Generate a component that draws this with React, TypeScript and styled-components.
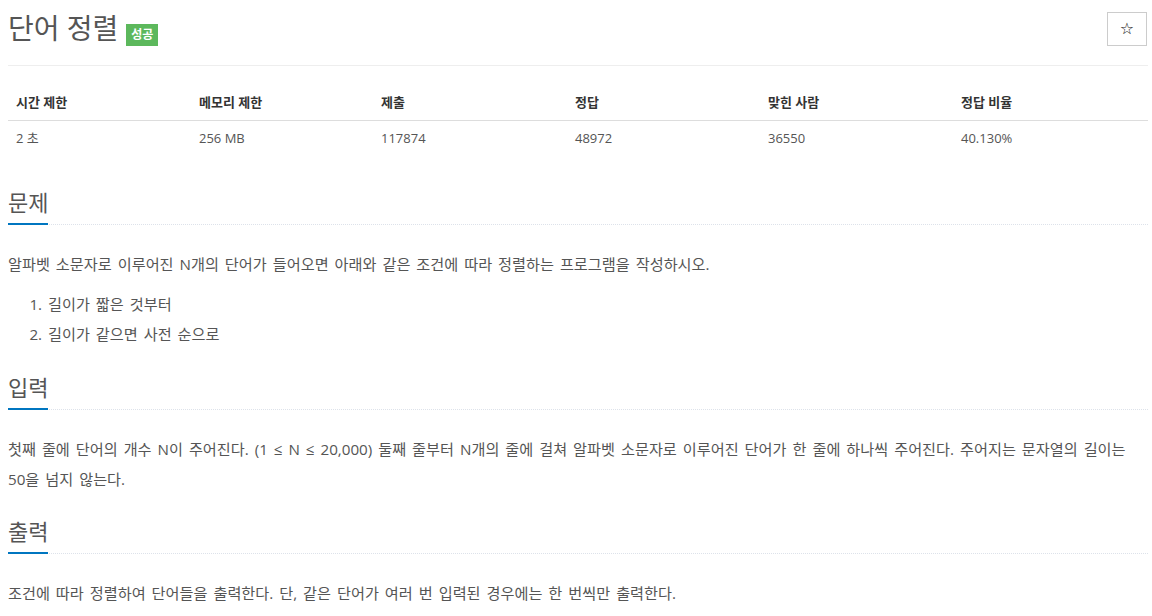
import styled, { createGlobalStyle } from "styled-components";

const GlobalStyle = createGlobalStyle`
  body {
    margin: 0;
    background: #fff;
    font-family: "Open Sans", "Liberation Sans", "Noto Sans CJK KR", sans-serif;
    color: #333;
  }
`;

const Page = styled.div`
  width: 1140px;
  margin-left: 8px;
`;

const TitleRow = styled.div`
  display: flex;
  align-items: center;
  justify-content: space-between;
  padding: 11px 0 19px;
  border-bottom: 1px solid #eee;
`;

const Title = styled.h1`
  display: flex;
  align-items: baseline;
  gap: 8px;
  margin: 0;
  font-size: 28px;
  font-weight: 400;
  line-height: 34px;
  color: #555;
`;

const Badge = styled.span`
  display: inline-block;
  background: #5cb85c;
  color: #fff;
  font-size: 12px;
  font-weight: 700;
  line-height: 15px;
  padding: 3px 5px 4px;
`;

const StarButton = styled.button`
  width: 40px;
  height: 34px;
  margin-right: 1px;
  border: 1px solid #ccc;
  background: #fff;
  color: #111;
  font-family: "DejaVu Sans", sans-serif;
  font-size: 16px;
  padding: 0;
  cursor: pointer;
`;

const InfoTable = styled.table`
  width: 100%;
  margin-top: 18px;
  border-collapse: collapse;
  table-layout: fixed;
  font-size: 13px;
`;

const Th = styled.th<{ $w?: number }>`
  width: ${(p) => (p.$w ? `${p.$w}px` : "auto")};
  text-align: left;
  font-weight: 700;
  padding: 8px;
  line-height: 20px;
  border-bottom: 1px solid #ddd;
  color: #333;
`;

const Td = styled.td`
  padding: 7px 8px 8px;
  line-height: 20px;
  color: #555;
`;

const Section = styled.section<{ $top: number }>`
  margin-top: ${(p) => p.$top}px;
`;

const Headline = styled.div`
  border-bottom: 1px dotted #dde2ea;
  margin-bottom: 24px;
`;

const HeadlineTitle = styled.h2`
  display: inline-block;
  margin: 0 0 -1px;
  padding-bottom: 9px;
  font-size: 22px;
  font-weight: 400;
  line-height: 24px;
  color: #555;
  border-bottom: 2px solid #0076c0;
`;

const Text = styled.p`
  margin: 0 0 10px;
  font-size: 15.2px;
  word-spacing: 2px;
  line-height: 30px;
  color: #555;
`;

const List = styled.ol`
  margin: 0;
  padding-left: 40px;
  font-size: 15.2px;
  word-spacing: 2px;
  line-height: 30px;
  color: #555;
`;

// widths are content widths (th padding of 16px is added on top)
const columns = [
  { label: "시간 제한", value: "2 초", w: 167 },
  { label: "메모리 제한", value: "256 MB", w: 166 },
  { label: "제출", value: "117874", w: 178 },
  { label: "정답", value: "48972", w: 177 },
  { label: "맞힌 사람", value: "36550", w: 177 },
  { label: "정답 비율", value: "40.130%", w: 0 },
];

export default function App() {
  return (
    <Page>
      <GlobalStyle />
      <TitleRow>
        <Title>
          단어 정렬 <Badge>성공</Badge>
        </Title>
        <StarButton>☆</StarButton>
      </TitleRow>

      <InfoTable>
        <thead>
          <tr>
            {columns.map((c) => (
              <Th key={c.label} $w={c.w}>
                {c.label}
              </Th>
            ))}
          </tr>
        </thead>
        <tbody>
          <tr>
            {columns.map((c) => (
              <Td key={c.label}>{c.value}</Td>
            ))}
          </tr>
        </tbody>
      </InfoTable>

      <Section $top={34}>
        <Headline>
          <HeadlineTitle>문제</HeadlineTitle>
        </Headline>
        <Text>
          알파벳 소문자로 이루어진 N개의 단어가 들어오면 아래와 같은 조건에 따라 정렬하는 프로그램을 작성하시오.
        </Text>
        <List>
          <li>길이가 짧은 것부터</li>
          <li>길이가 같으면 사전 순으로</li>
        </List>
      </Section>

      <Section $top={26}>
        <Headline>
          <HeadlineTitle>입력</HeadlineTitle>
        </Headline>
        <Text>
          첫째 줄에 단어의 개수 N이 주어진다. (1 ≤ N ≤ 20,000) 둘째 줄부터 N개의 줄에 걸쳐 알파벳 소문자로 이루어진 단어가 한 줄에 하나씩 주어진다. 주어지는 문자열의 길이는 50을 넘지 않는다.
        </Text>
      </Section>

      <Section $top={25}>
        <Headline>
          <HeadlineTitle>출력</HeadlineTitle>
        </Headline>
        <Text>조건에 따라 정렬하여 단어들을 출력한다. 단, 같은 단어가 여러 번 입력된 경우에는 한 번씩만 출력한다.</Text>
      </Section>
    </Page>
  );
}
